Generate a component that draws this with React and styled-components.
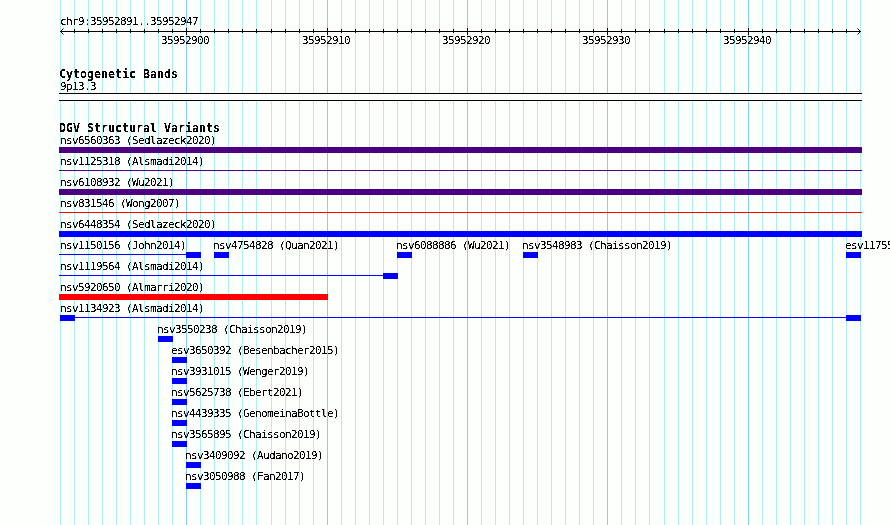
import styled, { createGlobalStyle } from 'styled-components'

const INICIO = 35952891
const BASES = 57
const ANCHO = 800

const posicion = (base) => Math.round(((base - INICIO) * ANCHO) / BASES)

const marcas = Array.from({ length: BASES + 1 }, (_, i) => INICIO + i)
const principales = marcas.filter((base) => base % 10 === 0)

// x, lineas and cajas are measured from the left edge of the panel
const filas = [
    [{ x: 0, nombre: 'nsv6560363 (Sedlazeck2020)', cajas: [[-1, 803]], color: '#4b0082' }],
    [{ x: 0, nombre: 'nsv1125318 (Alsmadi2014)', lineas: [[-1, 803]], color: '#4b0082' }],
    [{ x: 0, nombre: 'nsv6108932 (Wu2021)', cajas: [[-1, 803]], color: '#4b0082' }],
    [{ x: 0, nombre: 'nsv831546 (Wong2007)', lineas: [[-1, 803]], color: '#ff0000' }],
    [{ x: 0, nombre: 'nsv6448354 (Sedlazeck2020)', cajas: [[-1, 803]] }],
    [
        { x: 0, nombre: 'nsv1150156 (John2014)', lineas: [[-1, 127]], cajas: [[126, 15]] },
        { x: 153, nombre: 'nsv4754828 (Quan2021)', cajas: [[154, 15]] },
        { x: 336, nombre: 'nsv6088886 (Wu2021)', cajas: [[337, 15]] },
        { x: 462, nombre: 'nsv3548983 (Chaisson2019)', cajas: [[463, 15]] },
        { x: 785, nombre: 'esv11755', cajas: [[786, 15]] },
    ],
    [{ x: 0, nombre: 'nsv1119564 (Alsmadi2014)', lineas: [[-1, 324]], cajas: [[323, 15]] }],
    [{ x: 0, nombre: 'nsv5920650 (Almarri2020)', cajas: [[-1, 269]], color: '#ff0000' }],
    [{ x: 0, nombre: 'nsv1134923 (Alsmadi2014)', lineas: [[15, 771]], cajas: [[0, 15], [786, 15]] }],
    [{ x: 97, nombre: 'nsv3550238 (Chaisson2019)', cajas: [[98, 15]] }],
    [{ x: 111, nombre: 'esv3650392 (Besenbacher2015)', cajas: [[112, 15]] }],
    [{ x: 111, nombre: 'nsv3931015 (Wenger2019)', cajas: [[112, 15]] }],
    [{ x: 111, nombre: 'nsv5625738 (Ebert2021)', cajas: [[112, 15]] }],
    [{ x: 111, nombre: 'nsv4439335 (GenomeinaBottle)', cajas: [[112, 15]] }],
    [{ x: 111, nombre: 'nsv3565895 (Chaisson2019)', cajas: [[112, 15]] }],
    [{ x: 125, nombre: 'nsv3409092 (Audano2019)', cajas: [[126, 15]] }],
    [{ x: 125, nombre: 'nsv3050988 (Fan2017)', cajas: [[126, 15]] }],
]

const App = () => {
    return (
        <>
            <Global />
            <Navegador>
                <Cuadricula>
                    <filter id="nitido" colorInterpolationFilters="sRGB">
                        <feComponentTransfer>
                            <feFuncA type="linear" slope="6" intercept="-2.3" />
                        </feComponentTransfer>
                    </filter>
                    {marcas.map((base) => (
                        <path
                            key={base}
                            d={`M${posicion(base) + 0.5} 0V525`}
                            stroke={base % 10 === 0 ? '#87ceeb' : '#afeeee'}
                        />
                    ))}
                </Cuadricula>
                <Panel>
                    <Region>chr9:35952891..35952947</Region>
                    <Regla viewBox="0 0 802 8">
                        <path d="M0 3.5H801M3.5 0.5L0.5 3.5L3.5 6.5M797.5 0.5L800.5 3.5L797.5 6.5" />
                        {marcas.slice(1, -1).map((base) => (
                            <path
                                key={base}
                                d={`M${posicion(base) + 0.5} ${base % 10 === 0 ? '0V7' : '1V5'}`}
                            />
                        ))}
                    </Regla>
                    <Numeros>
                        {principales.map((base) => (
                            <Numero key={base} $x={posicion(base) - 25}>{base}</Numero>
                        ))}
                    </Numeros>

                    <Titulo>Cytogenetic Bands</Titulo>
                    <Banda>9p13.3</Banda>
                    <Cromosoma />

                    <Titulo>DGV Structural Variants</Titulo>
                    {filas.map((fila, i) => (
                        <Fila key={i}>
                            {fila.map((v) => (
                                <Variante key={v.nombre} $color={v.color}>
                                    <Nombre $x={v.x}>{v.nombre}</Nombre>
                                    <Glifo>
                                        {v.lineas?.map(([x, w]) => <Linea key={x} $x={x} $w={w} />)}
                                        {v.cajas?.map(([x, w]) => <Caja key={x} $x={x} $w={w} />)}
                                    </Glifo>
                                </Variante>
                            ))}
                        </Fila>
                    ))}
                </Panel>
            </Navegador>
        </>
    )
}

export default App;

const Global = createGlobalStyle`
    body{
        margin: 0;
        background: #fdfffd;
    }
`;
const Navegador = styled.main`
    display: grid;
    width: 890px;
    height: 525px;
    box-sizing: border-box;
    padding-left: 60px;
    overflow: hidden;
    background: #fdfffd;
    color: #000;
    font-family: 'DejaVu Sans Mono', monospace;
    font-size: 11px;
    line-height: 13px;
    letter-spacing: -.622px;
    white-space: nowrap;
`;
const Cuadricula = styled.svg`
    grid-area: 1 / 1;
    width: 802px;
    height: 525px;
`;
const Panel = styled.div`
    grid-area: 1 / 1;
    position: relative;
    min-width: 0;
    padding-top: 15px;
`;
const Region = styled.div`
    height: 13px;
    filter: url(#nitido);
`;
const Regla = styled.svg`
    display: block;
    width: 802px;
    height: 8px;
    fill: none;
    stroke: #000;
`;
const Numeros = styled.div`
    display: grid;
    height: 13px;
    margin-top: -2px;
    margin-bottom: 21px;
    filter: url(#nitido);
`;
const Numero = styled.span`
    grid-area: 1 / 1;
    margin-left: ${({ $x }) => $x}px;
`;
const Titulo = styled.h2`
    margin: 0 0 0 -1px;
    height: 12px;
    font-size: 11.6px;
    font-weight: 700;
    line-height: 13px;
    letter-spacing: .016px;
    filter: url(#nitido);
`;
const Banda = styled.div`
    height: 13px;
    filter: url(#nitido);
`;
const Cromosoma = styled.div`
    width: 803px;
    height: 8px;
    box-sizing: border-box;
    margin: 0 0 21px -1px;
    border: solid #000;
    border-width: 1px 0;
    background: #fdfffd;
`;
const Fila = styled.div`
    display: grid;
    height: 21px;
`;
const Variante = styled.div`
    grid-area: 1 / 1;
    min-width: 0;
    color: ${({ $color }) => $color || '#0000ff'};
`;
const Nombre = styled.div`
    height: 13px;
    margin-left: ${({ $x }) => $x}px;
    color: #000;
    filter: url(#nitido);
`;
const Glifo = styled.div`
    display: grid;
    height: 6px;
    align-items: start;
`;
const Linea = styled.span`
    grid-area: 1 / 1;
    width: ${({ $w }) => $w}px;
    height: 1px;
    margin: 2px 0 0 ${({ $x }) => $x}px;
    background: currentColor;
`;
const Caja = styled.span`
    grid-area: 1 / 1;
    width: ${({ $w }) => $w}px;
    height: 6px;
    margin-left: ${({ $x }) => $x}px;
    background: currentColor;
`;
